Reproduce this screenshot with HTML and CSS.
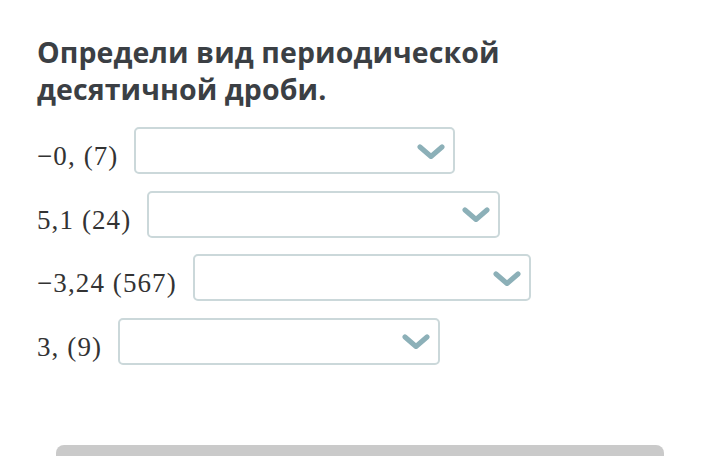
FILE: index.html
```html
<!DOCTYPE html>
<html lang="ru">
<head>
    <meta charset="UTF-8">
    <meta name="viewport" content="width=device-width, initial-scale=1.0">
    <title>Периодические дроби</title>
    <link rel="stylesheet" href="styles.css">
</head>
<body>
    <main class="task">
        <h1 class="task-title">Определи вид периодической десятичной дроби.</h1>

        <div class="answer-list">
            <div class="answer-row">
                <span class="answer-label">−0, (7)</span>
                <div class="dropdown dropdown-a">
                    <svg class="chevron" viewBox="0 0 28 16" aria-hidden="true"><path d="M3 3 L14 12.5 L25 3"/></svg>
                </div>
            </div>
            <div class="answer-row">
                <span class="answer-label">5,1 (24)</span>
                <div class="dropdown dropdown-b">
                    <svg class="chevron" viewBox="0 0 28 16" aria-hidden="true"><path d="M3 3 L14 12.5 L25 3"/></svg>
                </div>
            </div>
            <div class="answer-row">
                <span class="answer-label">−3,24 (567)</span>
                <div class="dropdown dropdown-c">
                    <svg class="chevron" viewBox="0 0 28 16" aria-hidden="true"><path d="M3 3 L14 12.5 L25 3"/></svg>
                </div>
            </div>
            <div class="answer-row">
                <span class="answer-label">3, (9)</span>
                <div class="dropdown dropdown-d">
                    <svg class="chevron" viewBox="0 0 28 16" aria-hidden="true"><path d="M3 3 L14 12.5 L25 3"/></svg>
                </div>
            </div>
        </div>

        <div class="submit-bar"></div>
    </main>
</body>
</html>
```

FILE: styles.css
```css
:root {
    --text-color: #3b3f44;
    --label-color: #333333;
    --border-color: #cbd8da;
    --chevron-color: #8cb0b8;
    --bar-color: #cacaca;
}

html, body {
    margin: 0;
    padding: 0;
    height: 456px;
    overflow: hidden;
    background: #ffffff;
}

.task {
    padding: 34px 0 0 37px;
}

.task-title {
    margin: 0;
    width: 490px;
    font-family: 'Open Sans', sans-serif;
    font-weight: 700;
    font-size: 28.5px;
    letter-spacing: 0.1px;
    line-height: 37px;
    color: var(--text-color);
}

.answer-list {
    margin-top: 19px;
    display: flex;
    flex-direction: column;
    gap: 16.5px;
}

.answer-row {
    display: flex;
    align-items: center;
    gap: 16px;
}

.answer-label {
    padding-top: 12px;
    font-family: 'Liberation Serif', serif;
    font-size: 27px;
    letter-spacing: 1.1px;
    color: var(--label-color);
    white-space: nowrap;
}

.dropdown {
    box-sizing: border-box;
    height: 47px;
    border: 2px solid var(--border-color);
    border-radius: 5px;
    display: flex;
    align-items: center;
    justify-content: flex-end;
    padding-right: 8px;
}

.dropdown-a { width: 321px; }
.dropdown-b { width: 353px; }
.dropdown-c { width: 338px; }
.dropdown-d { width: 322px; }

.chevron {
    width: 28px;
    height: 16px;
    margin-top: 2px;
}

.chevron path {
    fill: none;
    stroke: var(--chevron-color);
    stroke-width: 5;
    stroke-linecap: round;
    stroke-linejoin: round;
}

.submit-bar {
    margin: 80px 0 0 19px;
    width: 608px;
    height: 30px;
    background: var(--bar-color);
    border-radius: 8px 8px 0 0;
}
```
